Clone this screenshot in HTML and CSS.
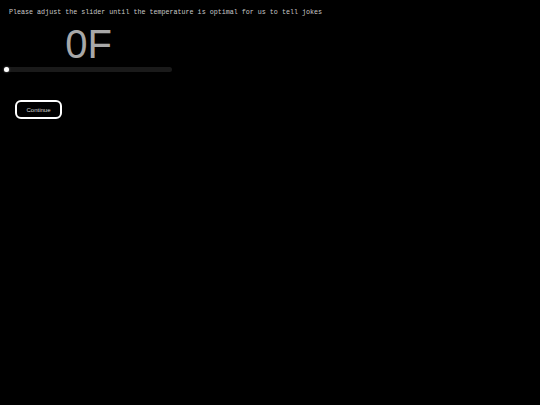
FILE: index.html
```html
<!DOCTYPE html>
<html lang="en">
<head>
  <meta charset="UTF-8" />
  <title>Temperature</title>
  <link rel="stylesheet" href="styles.css">
</head>
<body>
  <p class="prompt">Please adjust the slider until the temperature is optimal for us to tell jokes</p>

  <div class="temp-box">
    <div class="temp-value"><span id="temp">0</span>F</div>
    <input type="range" class="temp-slider" id="slider" min="0" max="100" value="0">
  </div>

  <button class="continue-button">Continue</button>

  <script>
    const slider = document.getElementById("slider");
    const temp = document.getElementById("temp");
    slider.addEventListener("input", () => {
      temp.innerText = slider.value;
    });
  </script>
</body>
</html>
```

FILE: styles.css
```css
* {
  box-sizing: border-box;
  margin: 0;
  padding: 0;
}

body {
  background-color: black;
  color: #cfcfcf;
  font-family: 'Liberation Sans', Arial, sans-serif;
  padding: 8px 4px;
}

.prompt {
  font-family: 'Liberation Mono', 'Courier New', monospace;
  font-size: 6.7px;
  line-height: 8px;
  padding-left: 5px;
  color: #c8c8c8;
}

.temp-box {
  width: 168px;
  display: flex;
  flex-direction: column;
  align-items: center;
}

.temp-value {
  font-family: 'Liberation Sans', Arial, sans-serif;
  font-size: 40px;
  line-height: 40px;
  color: #a8a8a8;
  margin-top: 8px;
  margin-left: 1px;
}

.temp-slider {
  -webkit-appearance: none;
  appearance: none;
  width: 168px;
  height: 5px;
  margin-top: 3px;
  background: #1a1a1a;
  border-radius: 3px;
  outline: none;
}

.temp-slider::-webkit-slider-thumb {
  -webkit-appearance: none;
  appearance: none;
  width: 5px;
  height: 5px;
  border-radius: 50%;
  background: white;
  box-shadow: 0 0 2px rgba(255, 255, 255, 0.6);
}

.continue-button {
  display: block;
  margin: 28px 0 0 11px;
  width: 47px;
  height: 19px;
  background: black;
  color: #d8d8d8;
  border: 2px solid white;
  border-radius: 6px;
  font-family: 'Liberation Sans', Arial, sans-serif;
  font-size: 6px;
}
```
